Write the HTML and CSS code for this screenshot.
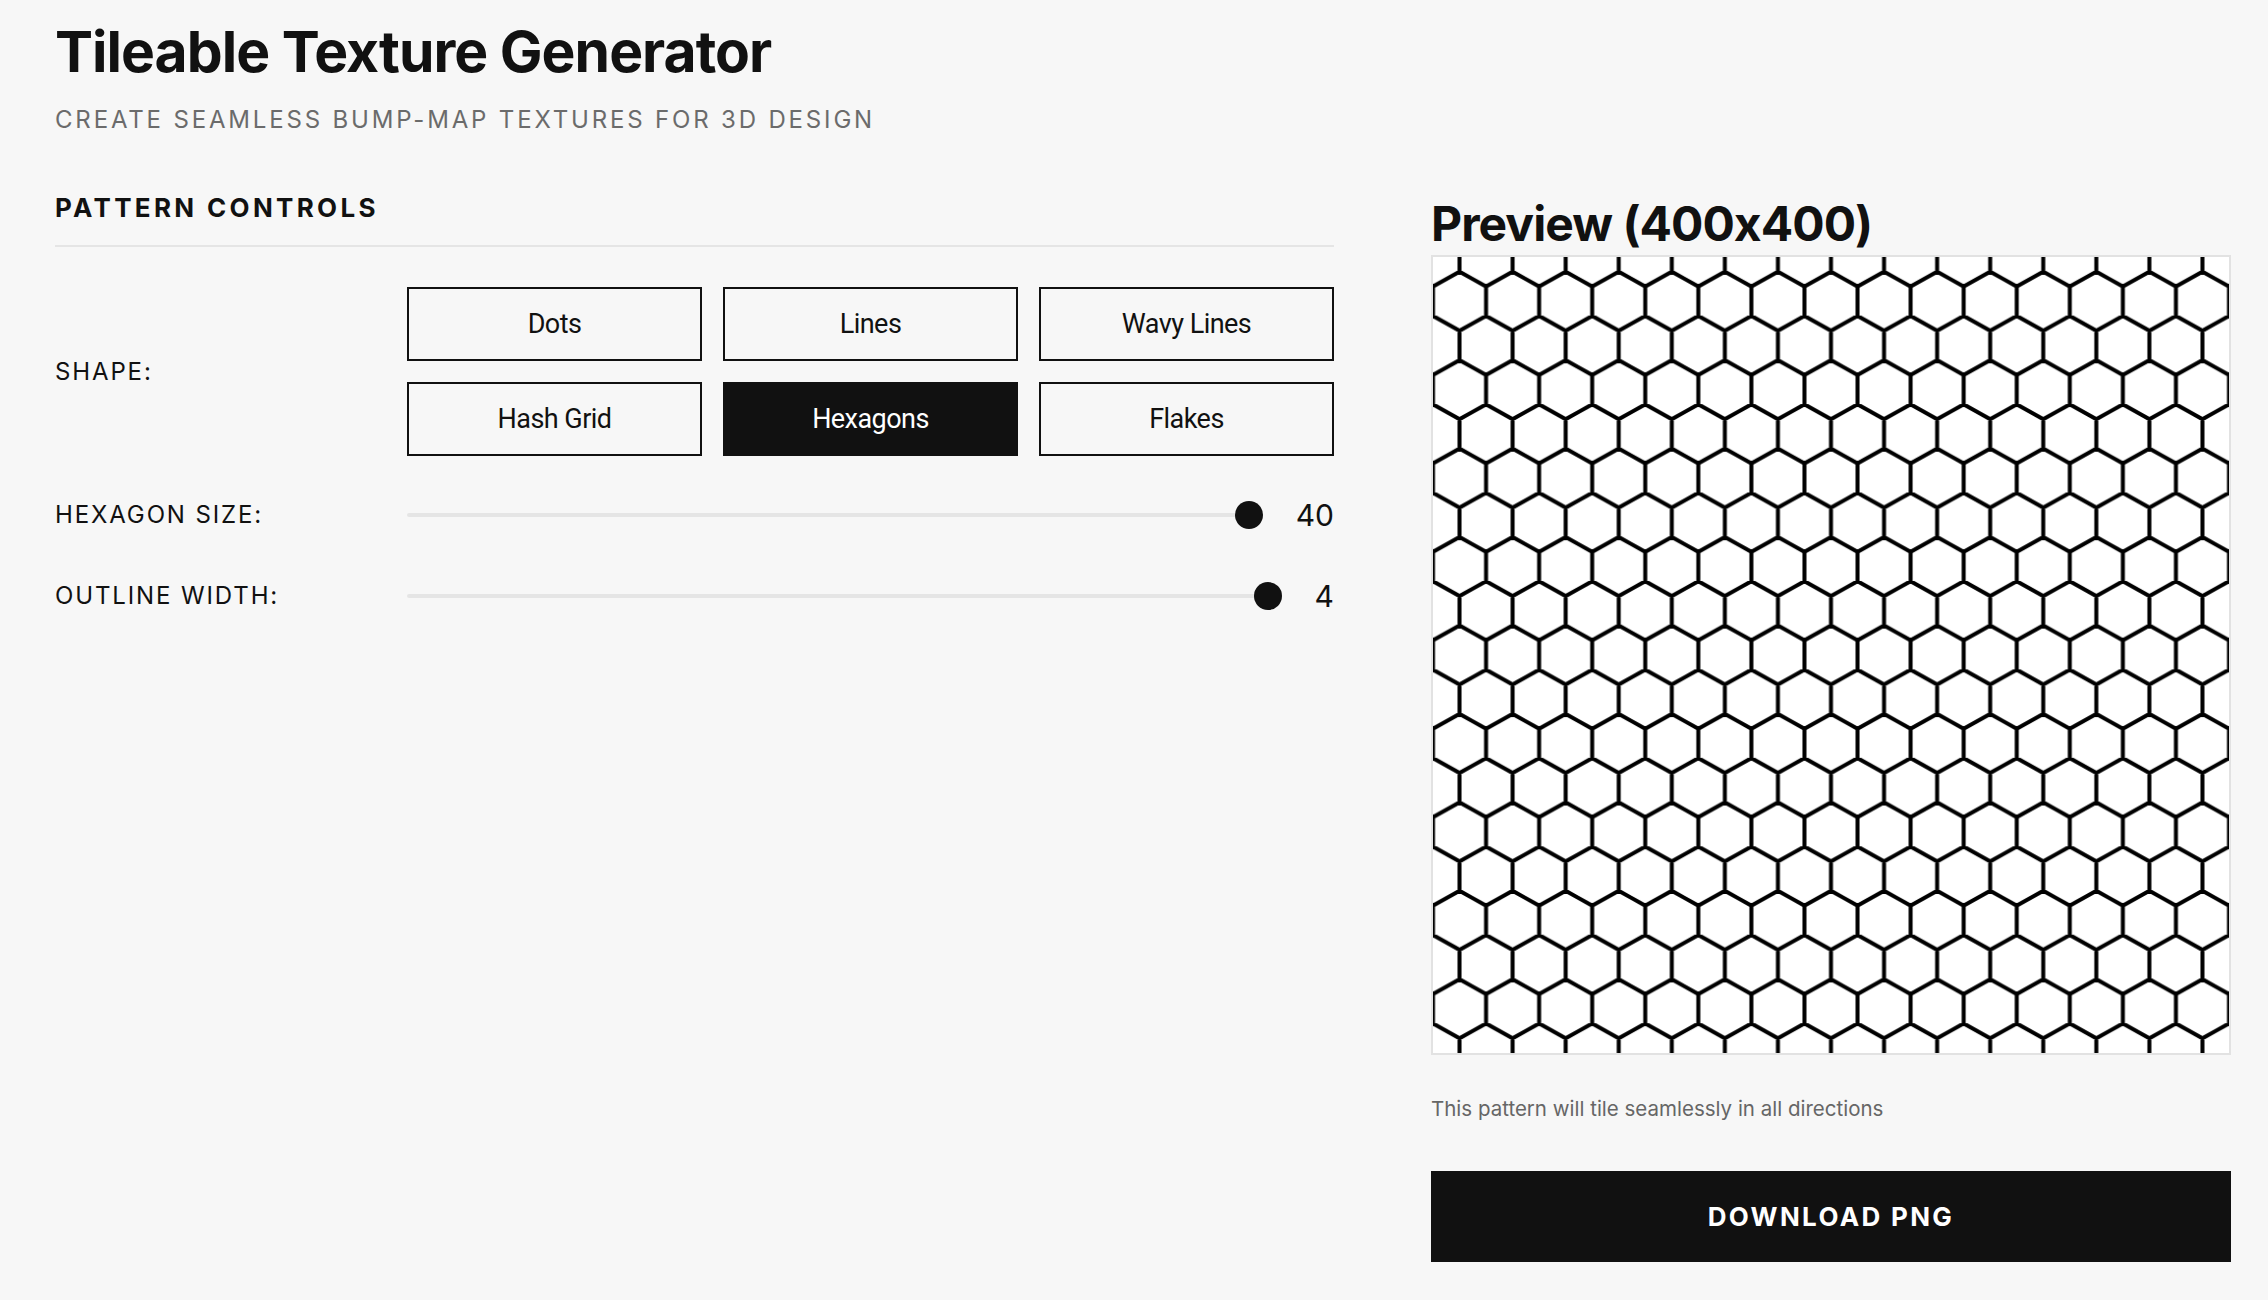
FILE: index.html
```html
<!DOCTYPE html>
<html lang="en">
<head>
<meta charset="utf-8">
<title>Tileable Texture Generator</title>
<link rel="stylesheet" href="styles.css">
</head>
<body>
<div class="page">
  <header class="header">
    <h1 class="title">Tileable Texture Generator</h1>
    <p class="subtitle">Create seamless bump-map textures for 3D design</p>
  </header>
  <main class="layout">
    <section class="controls">
      <h2 class="section-title">Pattern Controls</h2>
      <div class="control-list">
        <div class="control-row shape-row">
          <span class="control-label">Shape:</span>
          <div class="shape-grid">
            <button class="shape-btn">Dots</button>
            <button class="shape-btn">Lines</button>
            <button class="shape-btn">Wavy Lines</button>
            <button class="shape-btn">Hash Grid</button>
            <button class="shape-btn active">Hexagons</button>
            <button class="shape-btn">Flakes</button>
          </div>
        </div>
        <div class="control-row slider-row">
          <span class="control-label">Hexagon Size:</span>
          <div class="slider-wrap">
            <input class="range" type="range" min="10" max="40" value="40">
            <span class="value">40</span>
          </div>
        </div>
        <div class="control-row slider-row">
          <span class="control-label">Outline Width:</span>
          <div class="slider-wrap">
            <input class="range" type="range" min="1" max="4" value="4">
            <span class="value">4</span>
          </div>
        </div>
      </div>
    </section>
    <section class="preview">
      <h2 class="preview-title">Preview (400x400)</h2>
      <div class="canvas-frame">
        <svg class="texture" width="796" height="796" viewBox="0 0 796 796">
          <defs>
            <pattern id="hex" x="-13.2667" y="0" width="53.0667" height="88.4444" patternUnits="userSpaceOnUse">
              <path transform="translate(13.2667 0)" fill="none" stroke="#000" stroke-width="4" stroke-linejoin="miter"
                d="M0,-29.48 L26.5333,-14.7422 L26.5333,14.7422 L0,29.48 L-26.5333,14.7422 L-26.5333,-14.7422Z
                   M53.0667,-29.48 L79.6,-14.7422 L79.6,14.7422 L53.0667,29.48 L26.5333,14.7422 L26.5333,-14.7422Z
                   M-26.5333,14.7422 L0,29.48 L0,58.9644 L-26.5333,73.7022 L-53.0667,58.9644 L-53.0667,29.48Z
                   M26.5333,14.7422 L53.0667,29.48 L53.0667,58.9644 L26.5333,73.7022 L0,58.9644 L0,29.48Z
                   M79.6,14.7422 L106.1333,29.48 L106.1333,58.9644 L79.6,73.7022 L53.0667,58.9644 L53.0667,29.48Z
                   M0,58.9644 L26.5333,73.7022 L26.5333,103.1866 L0,117.9244 L-26.5333,103.1866 L-26.5333,73.7022Z
                   M53.0667,58.9644 L79.6,73.7022 L79.6,103.1866 L53.0667,117.9244 L26.5333,103.1866 L26.5333,73.7022Z"/>
            </pattern>
          </defs>
          <rect width="796" height="796" fill="#fff"/>
          <rect width="796" height="796" fill="url(#hex)"/>
        </svg>
      </div>
      <p class="hint">This pattern will tile seamlessly in all directions</p>
      <button class="download">Download PNG</button>
    </section>
  </main>
</div>
</body>
</html>
```

FILE: styles.css
```css
* {
  box-sizing: border-box;
}

body {
  margin: 0;
  background: #f7f7f7;
  color: #111;
  font-family: Inter, "Noto Sans", "Liberation Sans", sans-serif;
}

.page {
  padding: 18px 37px 40px 55px;
}

.title {
  margin: 0;
  font-size: 57px;
  line-height: 1.2;
  font-weight: 700;
  letter-spacing: -0.017em;
}

.subtitle {
  margin: 20px 0 0;
  font-size: 24px;
  line-height: 1.2;
  letter-spacing: 0.118em;
  text-transform: uppercase;
  color: #6b6b6b;
}

.layout {
  display: grid;
  grid-template-columns: 1279px 800px;
  column-gap: 97px;
  margin-top: 57px;
  align-items: start;
}

.section-title {
  margin: 0;
  padding-bottom: 22px;
  border-bottom: 2px solid #e5e5e5;
  font-size: 26px;
  line-height: 1.2;
  font-weight: 700;
  letter-spacing: 0.128em;
  text-transform: uppercase;
}

.control-list {
  margin-top: 40px;
  display: flex;
  flex-direction: column;
}

.shape-row {
  margin-bottom: 41px;
}

.shape-row .control-label {
  padding-top: 2px;
}

.slider-row + .slider-row {
  margin-top: 45px;
}

.control-row {
  display: grid;
  grid-template-columns: 352px 1fr;
  align-items: center;
}

.control-label {
  font-size: 24px;
  line-height: 1.2;
  letter-spacing: 0.078em;
  text-transform: uppercase;
}

.shape-grid {
  display: grid;
  grid-template-columns: repeat(3, 1fr);
  gap: 21px;
}

.shape-btn {
  height: 74px;
  margin: 0;
  padding: 0;
  border: 2px solid #111;
  background: transparent;
  color: #111;
  font-family: Roboto, Inter, sans-serif;
  font-size: 27px;
  letter-spacing: -0.02em;
}

.shape-btn.active {
  background: #111;
  color: #fff;
}

.slider-wrap {
  display: flex;
  align-items: center;
  gap: 33px;
  height: 36px;
}

.range {
  -webkit-appearance: none;
  appearance: none;
  flex: 1;
  margin: 0;
  height: 28px;
  background: transparent;
}

.range::-webkit-slider-runnable-track {
  height: 4px;
  background: #e5e5e5;
  border-radius: 2px;
}

.range::-webkit-slider-thumb {
  -webkit-appearance: none;
  appearance: none;
  width: 28px;
  height: 28px;
  margin-top: -12px;
  border: none;
  border-radius: 50%;
  background: #111;
}

.value {
  font-size: 30px;
  line-height: 1.2;
}

.preview-title {
  margin: 3px 0 0;
  font-size: 48px;
  line-height: 1.2;
  font-weight: 700;
  letter-spacing: -0.02em;
}

.canvas-frame {
  margin-top: 2.5px;
  width: 800px;
  height: 800px;
  border: 2px solid #e2e2e2;
  background: #fff;
  line-height: 0;
}

.texture {
  display: block;
}

.hint {
  margin: 42px 0 0;
  font-size: 20.5px;
  line-height: 1.2;
  color: #666;
}

.download {
  display: block;
  width: 100%;
  height: 91px;
  margin-top: 49px;
  border: none;
  background: #111;
  color: #fff;
  font-family: Inter, "Noto Sans", sans-serif;
  font-size: 26px;
  font-weight: 700;
  letter-spacing: 0.09em;
  text-transform: uppercase;
}
```
